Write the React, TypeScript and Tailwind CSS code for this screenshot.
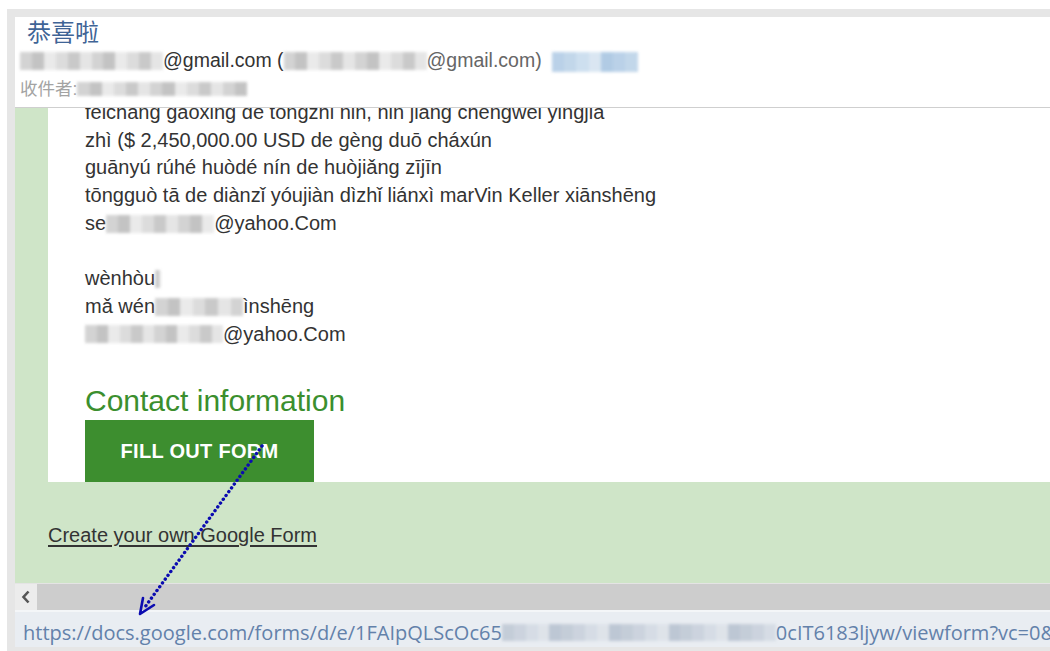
import React from 'react'

const sans = { fontFamily: '"Liberation Sans", Arial, "Noto Sans CJK TC", sans-serif' }
const statusFont = { fontFamily: '"Open Sans", "Noto Sans", sans-serif' }

// pixelated smudge used for hidden addresses and names
function Smudge({ w, h = 18, tint = 'gray' }: { w: number; h?: number; tint?: 'gray' | 'blue' | 'status' }) {
  const cells = Math.max(3, Math.round(w / 12))
  const palette =
    tint === 'blue'
      ? ['#bcd3e8', '#a9c6e2', '#c8dcee', '#b3cde6', '#d6e4f1']
      : tint === 'status'
        ? ['#c9d1dc', '#b9c3d1', '#d4dbe4', '#c1cad6', '#dde2e9']
        : ['#d9d9d9', '#c4c4c4', '#e3e3e3', '#cfcfcf', '#bdbdbd', '#e8e8e8']
  return (
    <span className="inline-flex shrink-0 align-middle blur-[1.5px] opacity-90" style={{ width: w, height: h }}>
      {Array.from({ length: cells }).map((_, i) => (
        <span key={i} className="flex-1 h-full" style={{ background: palette[(i * 7 + 3) % palette.length] }} />
      ))}
    </span>
  )
}

const bodyLines = [
  'feichang gaoxing de tongzhi nin, nin jiang chengwei yingjia',
  'zhì ($ 2,450,000.00 USD de gèng duō cháxún',
  'guānyú rúhé huòdé nín de huòjiǎng zījīn',
  'tōngguò tā de diànzǐ yóujiàn dìzhǐ liánxì marVin Keller xiānshēng',
]

export default function App() {
  return (
    <div className="relative w-[1050px] h-[651px] overflow-hidden bg-white pt-[9px] pl-[7px]" style={sans}>
      <div className="bg-[#e6e6e6] pt-[8px] pl-[8px] h-[642px]">
        {/* message header */}
        <div className="bg-white h-[91px] border-b border-[#cfcfcf] pt-[1px]">
          <div className="pl-[12px] text-[24px] leading-[29px] text-[#3f6496]">恭喜啦</div>
          <div className="pl-[5px] flex items-center h-[27px] text-[19.5px] text-[#333]">
            <Smudge w={143} />
            <span>@gmail.com (</span>
            <Smudge w={143} />
            <span className="text-[#666]">@gmail.com)</span>
            <span className="ml-[10px]">
              <Smudge w={86} h={20} tint="blue" />
            </span>
          </div>
          <div className="pl-[5px] flex items-center h-[30px] text-[17.5px] text-[#a3a3a3]">
            <span>收件者:</span>
            <Smudge w={170} h={14} />
          </div>
        </div>

        {/* form email body */}
        <div className="bg-[#cfe5c8] h-[475px] flex flex-col">
          <div className="ml-[33px] bg-white h-[374px] overflow-hidden pl-[37px]">
            <div className="-mt-[9px] text-[20px] leading-[27.7px] text-[#333]">
              {bodyLines.map((l) => (
                <div key={l}>{l}</div>
              ))}
              <div className="flex items-center">
                <span>se</span>
                <Smudge w={108} />
                <span>@yahoo.Com</span>
              </div>
              <div className="h-[27.7px]" />
              <div className="flex items-center">
                <span>wènhòu</span>
                <Smudge w={6} />
              </div>
              <div className="flex items-center">
                <span>mǎ wén</span>
                <Smudge w={88} />
                <span>ìnshēng</span>
              </div>
              <div className="flex items-center">
                <Smudge w={138} />
                <span>@yahoo.Com</span>
              </div>
            </div>
            <div className="mt-[36px] text-[30px] leading-[34px] text-[#3b8f2e]">Contact information</div>
            <div className="mt-[2px] w-[229px] h-[62px] bg-[#3d8e2f] flex items-center justify-center text-white font-bold text-[20px] tracking-[0.3px]">
              FILL OUT FORM
            </div>
          </div>
          <div className="pl-[33px] pt-[38px] text-[20px] text-[#333]">
            <span className="underline underline-offset-[3px]">Create your own Google Form</span>
          </div>
        </div>

        {/* horizontal scrollbar */}
        <div className="h-[27px] bg-[#cdcdcd] border-t border-[#e4e4e4] flex">
          <div className="w-[22px] bg-[#ececec] flex items-center justify-center">
            <svg width="10" height="14" viewBox="0 0 10 14">
              <path d="M7.5 1.5 L2.5 7 L7.5 12.5" fill="none" stroke="#555" strokeWidth="2.6" />
            </svg>
          </div>
        </div>

        {/* status bar */}
        <div
          className="h-[37px] bg-[#e9edf2] border-t-2 border-[#f4f6f8] flex items-center pt-[6px] pl-[8px] text-[20px] text-[#6381aa] whitespace-nowrap overflow-hidden"
          style={statusFont}
        >
          <span className="shrink-0">https://docs.google.com/forms/d/e/1FAIpQLScOc65</span>
          <Smudge w={274} h={17} tint="status" />
          <span className="shrink-0">0cIT6183ljyw/viewform?vc=0&amp;c=0&amp;w=1</span>
        </div>
      </div>

      {/* dotted pointer from the button down to the link target */}
      <svg className="absolute left-0 top-0 pointer-events-none" width="1050" height="651">
        <line x1="262" y1="446" x2="145" y2="607" stroke="#0b0bb0" strokeWidth="3.4" strokeDasharray="0.1 4.6" strokeLinecap="round" />
        <path d="M140 614 L143 598 M140 614 L154 605" stroke="#0b0bb0" strokeWidth="2.6" strokeLinecap="round" fill="none" />
      </svg>
    </div>
  )
}
